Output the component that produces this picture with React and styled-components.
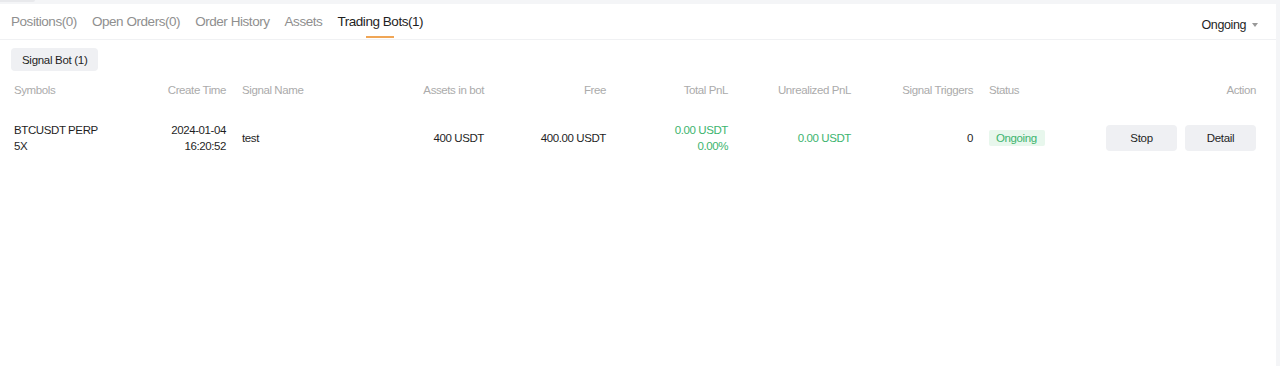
import React from "react";
import styled, { createGlobalStyle } from "styled-components";

const GlobalStyle = createGlobalStyle`
    html, body {
        margin: 0;
        padding: 0;
        background: #f4f5f7;
    }
    body {
        font-family: "Liberation Sans", Arial, sans-serif;
        color: #1f1f1f;
    }
`;

const Page = styled.div`
    height: 366px;
    padding: 4px 4px 0 0;
    box-sizing: border-box;
    position: relative;
`;

const TopNotch = styled.div`
    position: absolute;
    top: 0;
    left: 0;
    width: 35px;
    height: 2px;
    background: #e8e9ec;
    border-radius: 0 0 2px 0;
`;

const Panel = styled.div`
    background: #fff;
    height: 100%;
`;

const TabBar = styled.div`
    display: flex;
    align-items: center;
    justify-content: space-between;
    height: 35px;
    padding: 0 18px 0 11px;
    border-bottom: 1px solid #f0f1f3;
`;

const Tabs = styled.div`
    display: flex;
    gap: 15px;
    height: 100%;
`;

const Tab = styled.div`
    position: relative;
    display: flex;
    align-items: center;
    font-size: 13.5px;
    letter-spacing: -0.45px;
    color: ${(p) => (p.active ? "#1f1f1f" : "#8f8f8f")};
    &::after {
        content: "";
        display: ${(p) => (p.active ? "block" : "none")};
        position: absolute;
        left: 50%;
        bottom: 1px;
        width: 28px;
        height: 2px;
        margin-left: -14px;
        background: #f0a656;
    }
`;

const Filter = styled.div`
    display: flex;
    align-items: center;
    gap: 6px;
    font-size: 12.5px;
    letter-spacing: -0.4px;
    color: #1f1f1f;
    padding-top: 6px;
`;

const Caret = styled.span`
    width: 0;
    height: 0;
    border-left: 3px solid transparent;
    border-right: 3px solid transparent;
    border-top: 4px solid #999;
`;

const Body = styled.div`
    padding: 8px 16px 0 10px;
`;

const SubTab = styled.div`
    display: inline-flex;
    align-items: center;
    height: 23px;
    padding: 0 11px;
    margin-left: 1px;
    background: #eff0f3;
    border-radius: 4px;
    font-size: 11.5px;
    letter-spacing: -0.3px;
    color: #1f1f1f;
`;

const Row = styled.div`
    display: grid;
    grid-template-columns: 92px 120px 122px 120px 114px 114px 115px 114px 113px 1fr;
    column-gap: 8px;
    align-items: center;
    font-size: 11.5px;
    letter-spacing: -0.4px;
    line-height: 16px;
`;

const HeadRow = styled(Row)`
    height: 24px;
    margin-top: 7px;
    color: #ababab;
`;

const DataRow = styled(Row)`
    padding: 20px 0;
    color: #1f1f1f;
`;

const Cell = styled.div`
    padding: 0 4px;
    white-space: nowrap;
    text-align: ${(p) => p.align || "left"};
    color: ${(p) => (p.green ? "#3cb46e" : "inherit")};
`;

const Badge = styled.span`
    display: inline-block;
    padding: 0 8px 0 7px;
    background: #e8f7ed;
    color: #3cb46e;
    border-radius: 2px;
    line-height: 16px;
`;

const Actions = styled.div`
    display: flex;
    justify-content: flex-end;
    gap: 8px;
    padding-right: 4px;
`;

const Button = styled.button`
    width: 71px;
    height: 26px;
    border: none;
    border-radius: 4px;
    background: #eff0f3;
    font-family: inherit;
    font-size: 11.5px;
    letter-spacing: -0.3px;
    color: #1f1f1f;
`;

const tabs = ["Positions(0)", "Open Orders(0)", "Order History", "Assets", "Trading Bots(1)"];

const columns = [
    ["Symbols", "left"],
    ["Create Time", "right"],
    ["Signal Name", "left"],
    ["Assets in bot", "right"],
    ["Free", "right"],
    ["Total PnL", "right"],
    ["Unrealized PnL", "right"],
    ["Signal Triggers", "right"],
    ["Status", "left"],
    ["Action", "right"],
];

export default function App() {
    return (
        <>
            <GlobalStyle />
            <Page>
                <TopNotch />
                <Panel>
                    <TabBar>
                        <Tabs>
                            {tabs.map((t) => (
                                <Tab key={t} active={t === "Trading Bots(1)"}>{t}</Tab>
                            ))}
                        </Tabs>
                        <Filter>
                            Ongoing <Caret />
                        </Filter>
                    </TabBar>
                    <Body>
                        <SubTab>Signal Bot (1)</SubTab>
                        <HeadRow>
                            {columns.map(([name, align]) => (
                                <Cell key={name} align={align}>{name}</Cell>
                            ))}
                        </HeadRow>
                        <DataRow>
                            <Cell>BTCUSDT PERP<br />5X</Cell>
                            <Cell align="right">2024-01-04<br />16:20:52</Cell>
                            <Cell>test</Cell>
                            <Cell align="right">400 USDT</Cell>
                            <Cell align="right">400.00 USDT</Cell>
                            <Cell align="right" green>0.00 USDT<br />0.00%</Cell>
                            <Cell align="right" green>0.00 USDT</Cell>
                            <Cell align="right">0</Cell>
                            <Cell><Badge>Ongoing</Badge></Cell>
                            <Actions>
                                <Button>Stop</Button>
                                <Button>Detail</Button>
                            </Actions>
                        </DataRow>
                    </Body>
                </Panel>
            </Page>
        </>
    );
}
